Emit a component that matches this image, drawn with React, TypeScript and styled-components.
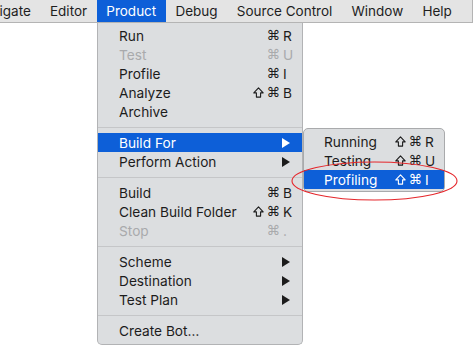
import React from "react";
import styled, { createGlobalStyle, css } from "styled-components";

const Global = createGlobalStyle`
  html, body { margin: 0; padding: 0; background: #ffffff; }
  body { font-family: Inter, "Liberation Sans", "DejaVu Sans", sans-serif; -webkit-font-smoothing: antialiased; }
`;

const BLUE = "#0d5fd8";

const Page = styled.div`
  position: relative;
  width: 474px;
  height: 359px;
  overflow: hidden;
`;

const MenuBar = styled.div`
  display: flex;
  align-items: stretch;
  width: 473px;
  height: 23px;
  box-sizing: border-box;
  background: #e4e4e4;
  border-bottom: 1px solid #b4b4b4;
  border-right: 1px solid #b4b4b4;
`;

const BarItem = styled.div<{ $active?: boolean; $first?: boolean }>`
  display: flex;
  align-items: center;
  padding: 0 9.6px;
  font-size: 13.5px;
  color: #1e1e1e;
  white-space: nowrap;
  ${(p) => p.$first && css`padding-left: 0; margin-left: -0.5px;`}
  ${(p) =>
    p.$active &&
    css`
      background: ${BLUE};
      color: #ffffff;
    `}
`;

const Dropdown = styled.div`
  position: absolute;
  top: 23px;
  left: 97px;
  width: 206px;
  box-sizing: border-box;
  background: #dcdee0;
  border: 1px solid #b2b3b5;
  border-top: none;
  border-radius: 0 0 5px 5px;
  padding: 3px 0 4px;
`;

const Item = styled.div<{ $active?: boolean; $disabled?: boolean }>`
  position: relative;
  display: flex;
  align-items: center;
  height: 19px;
  padding: 0 9px 0 21px;
  font-size: 13.7px;
  color: ${(p) => (p.$disabled ? "#a9aaac" : "#1c1c1c")};
  white-space: nowrap;
  ${(p) =>
    p.$active &&
    css`
      background: ${BLUE};
      color: #ffffff;
    `}
`;

const Label = styled.span`
  flex: 1;
`;

const Shortcut = styled.span`
  display: flex;
  align-items: center;
  gap: 3px;
  font-family: "DejaVu Sans", sans-serif;
  font-size: 13.5px;
`;

const Cmd = styled.span`
  line-height: 1;
`;

const ShiftIcon = styled.svg`
  width: 11px;
  height: 11px;
  flex: none;
`;

const Key = styled.span`
  display: inline-block;
  width: 10px;
  text-align: left;
  font-family: Inter, "Liberation Sans", sans-serif;
  font-size: 13.7px;
`;

const Arrow = styled.span<{ $light?: boolean }>`
  width: 0;
  height: 0;
  margin-right: 3px;
  border-top: 5px solid transparent;
  border-bottom: 5px solid transparent;
  border-left: 8px solid ${(p) => (p.$light ? "#ffffff" : "#1c1c1c")};
`;

const Separator = styled.div`
  display: flex;
  align-items: center;
  height: 12px;
  &::after {
    content: "";
    flex: 1;
    height: 1px;
    background: #c5c6c8;
  }
`;

const Submenu = styled.div`
  position: absolute;
  top: -5px;
  left: 205px;
  width: 142px;
  box-sizing: border-box;
  background: #dcdee0;
  border: 1px solid #a9aaac;
  border-radius: 5px;
  padding: 3px 0 2px;
  overflow: hidden;
  z-index: 2;
`;

const SubItem = styled(Item)`
  padding: 0 9px 0 20px;
`;

const Annotation = styled.svg`
  position: absolute;
  left: 290px;
  top: 160px;
  z-index: 5;
  overflow: visible;
`;

const Shift = () => (
  <ShiftIcon viewBox="0 0 11 11">
    <path
      d="M5.5 0.9 L10.2 5.9 H7.6 V10.1 H3.4 V5.9 H0.8 Z"
      fill="none"
      stroke="currentColor"
      strokeWidth="1.1"
      strokeLinejoin="round"
    />
  </ShiftIcon>
);

type Entry =
  | { kind: "sep" }
  | {
      kind: "item";
      label: string;
      shift?: boolean;
      keyChar?: string;
      arrow?: boolean;
      disabled?: boolean;
      active?: boolean;
    };

const entries: Entry[] = [
  { kind: "item", label: "Run", keyChar: "R" },
  { kind: "item", label: "Test", keyChar: "U", disabled: true },
  { kind: "item", label: "Profile", keyChar: "I" },
  { kind: "item", label: "Analyze", shift: true, keyChar: "B" },
  { kind: "item", label: "Archive" },
  { kind: "sep" },
  { kind: "item", label: "Build For", arrow: true, active: true },
  { kind: "item", label: "Perform Action", arrow: true },
  { kind: "sep" },
  { kind: "item", label: "Build", keyChar: "B" },
  { kind: "item", label: "Clean Build Folder", shift: true, keyChar: "K" },
  { kind: "item", label: "Stop", keyChar: ".", disabled: true },
  { kind: "sep" },
  { kind: "item", label: "Scheme", arrow: true },
  { kind: "item", label: "Destination", arrow: true },
  { kind: "item", label: "Test Plan", arrow: true },
  { kind: "sep" },
  { kind: "item", label: "Create Bot…" },
];

const subEntries = [
  { label: "Running", keyChar: "R" },
  { label: "Testing", keyChar: "U" },
  { label: "Profiling", keyChar: "I", active: true },
];

const barItems = ["igate", "Editor", "Product", "Debug", "Source Control", "Window", "Help"];

const ShortcutView = ({ shift, keyChar }: { shift?: boolean; keyChar: string }) => (
  <Shortcut>
    {shift && <Shift />}
    <Cmd>⌘</Cmd>
    <Key>{keyChar}</Key>
  </Shortcut>
);

export default function App() {
  return (
    <Page>
      <Global />
      <MenuBar>
        {barItems.map((b, i) => (
          <BarItem key={b} $first={i === 0} $active={b === "Product"}>
            {b}
          </BarItem>
        ))}
      </MenuBar>
      <Dropdown>
        {entries.map((e, i) =>
          e.kind === "sep" ? (
            <Separator key={i} />
          ) : (
            <Item key={i} $active={e.active} $disabled={e.disabled}>
              <Label>{e.label}</Label>
              {e.keyChar && <ShortcutView shift={e.shift} keyChar={e.keyChar} />}
              {e.arrow && <Arrow $light={e.active} />}
              {e.label === "Build For" && (
                <Submenu>
                  {subEntries.map((s) => (
                    <SubItem key={s.label} $active={s.active}>
                      <Label>{s.label}</Label>
                      <ShortcutView shift keyChar={s.keyChar} />
                    </SubItem>
                  ))}
                </Submenu>
              )}
            </Item>
          )
        )}
      </Dropdown>
      <Annotation width="170" height="42" viewBox="0 0 170 42">
        <ellipse cx="84.5" cy="21" rx="82.5" ry="19" fill="none" stroke="#e5262b" strokeWidth="1.1" />
      </Annotation>
    </Page>
  );
}
